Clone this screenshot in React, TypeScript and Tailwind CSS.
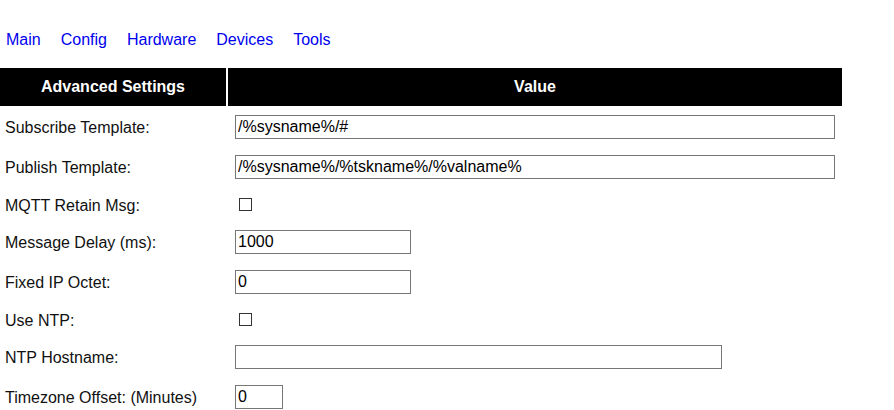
const links = ["Main", "Config", "Hardware", "Devices", "Tools"];

type Row =
  | { label: string; kind: "text"; value: string; width: string }
  | { label: string; kind: "check" };

const rows: Row[] = [
  { label: "Subscribe Template:", kind: "text", value: "/%sysname%/#", width: "w-[600px]" },
  { label: "Publish Template:", kind: "text", value: "/%sysname%/%tskname%/%valname%", width: "w-[600px]" },
  { label: "MQTT Retain Msg:", kind: "check" },
  { label: "Message Delay (ms):", kind: "text", value: "1000", width: "w-[176px]" },
  { label: "Fixed IP Octet:", kind: "text", value: "0", width: "w-[176px]" },
  { label: "Use NTP:", kind: "check" },
  { label: "NTP Hostname:", kind: "text", value: "", width: "w-[487px]" },
  { label: "Timezone Offset: (Minutes)", kind: "text", value: "0", width: "w-[48px]" },
];

const App = () => {
  return (
    <div className="min-h-screen bg-white font-['Liberation_Sans',Arial,sans-serif] text-[16px] text-black">
      {/* menu */}
      <nav className="flex gap-[20px] pl-[6px] pt-[31px] leading-[18px]">
        {links.map((l) => (
          <a key={l} href="#" className="text-[#0000ee]">
            {l}
          </a>
        ))}
      </nav>

      <div className="w-[842px] mt-[19px]">
        {/* header */}
        <div className="flex h-[38px] gap-[2px] text-white font-bold">
          <div className="w-[226px] bg-black flex items-center justify-center">Advanced Settings</div>
          <div className="flex-1 bg-black flex items-center justify-center">Value</div>
        </div>

        <div className="mt-[1px]">
          {rows.map((r) => (
            <div key={r.label} className={`flex items-center ${r.kind === "check" ? "h-[35px]" : "h-[40px]"}`}>
              <div className="w-[228px] pl-[5px] pt-[2px] whitespace-nowrap text-[#111]">{r.label}</div>
              <div className="pl-[7px] flex items-center">
                {r.kind === "text" ? (
                  <input
                    type="text"
                    defaultValue={r.value}
                    className={`${r.width} h-[24px] border border-[#767676] px-[2px] text-[16px] leading-[18px] bg-white outline-none`}
                  />
                ) : (
                  <input
                    type="checkbox"
                    className="appearance-none w-[13px] h-[13px] border border-[#333] bg-white ml-[4px]"
                  />
                )}
              </div>
            </div>
          ))}
        </div>
      </div>
    </div>
  );
};

export default App;
